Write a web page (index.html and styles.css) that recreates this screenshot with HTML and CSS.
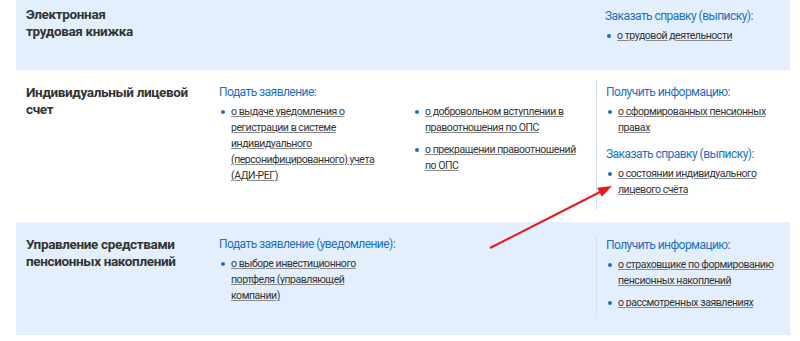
FILE: index.html
```html
<!DOCTYPE html>
<html lang="ru">
<head>
  <meta charset="UTF-8">
  <title>Услуги</title>
  <link rel="stylesheet" href="styles.css">
</head>
<body>
  <div class="services">
    <div class="row blue first">
      <h3 class="title">Электронная<br>трудовая книжка</h3>
      <div class="main"></div>
      <div class="side">
        <p class="head">Заказать справку (выписку):</p>
        <ul>
          <li><a href="#">о трудовой деятельности</a></li>
        </ul>
      </div>
    </div>

    <div class="row second">
      <h3 class="title">Индивидуальный лицевой счет</h3>
      <div class="main">
        <p class="head">Подать заявление:</p>
        <div class="cols">
          <ul>
            <li><a href="#">о выдаче уведомления о регистрации в системе индивидуального (персонифицированного) учета (АДИ-РЕГ)</a></li>
          </ul>
          <ul>
            <li><a href="#">о добровольном вступлении в правоотношения по ОПС</a></li>
            <li><a href="#">о прекращении правоотношений по ОПС</a></li>
          </ul>
        </div>
      </div>
      <div class="side">
        <p class="head">Получить информацию:</p>
        <ul>
          <li><a href="#">о сформированных пенсионных правах</a></li>
        </ul>
        <p class="head">Заказать справку (выписку):</p>
        <ul>
          <li><a href="#">о состоянии индивидуального лицевого счёта</a></li>
        </ul>
      </div>
    </div>

    <div class="row blue third">
      <h3 class="title">Управление средствами пенсионных накоплений</h3>
      <div class="main">
        <p class="head">Подать заявление (уведомление):</p>
        <div class="cols">
          <ul class="narrow">
            <li><a href="#">о выборе инвестиционного портфеля (управляющей компании)</a></li>
          </ul>
        </div>
      </div>
      <div class="side">
        <p class="head">Получить информацию:</p>
        <ul>
          <li><a href="#">о страховщике по формированию пенсионных накоплений</a></li>
          <li><a href="#">о рассмотренных заявлениях</a></li>
        </ul>
      </div>
    </div>

    <svg class="arrow" width="130" height="80" viewBox="0 0 130 80">
      <line x1="2" y1="76" x2="114" y2="19" stroke="#e8191a" stroke-width="2"/>
      <polygon points="124,14 113.8,24.8 109.2,15.8" fill="#e8191a"/>
    </svg>
  </div>
</body>
</html>
```

FILE: styles.css
```css
body {
  margin: 0;
  background: #fff;
  font-family: Roboto, "Noto Sans", Arial, sans-serif;
  color: #333;
}

.services {
  position: relative;
  width: 774px;
  margin-left: 16px;
}

.row {
  display: grid;
  grid-template-columns: 193px 377px 194px;
  padding-left: 10px;
  box-sizing: border-box;
}

.row.blue {
  background: #e3effd;
}

.first {
  height: 70px;
  padding-top: 6px;
}

.second {
  height: 152px;
  padding-top: 10px;
}

.second .title,
.second .main {
  margin-top: 4px;
}

.third {
  height: 113px;
  padding-top: 14px;
}

.title {
  margin: 0;
  font-size: 13.5px;
  line-height: 17px;
  font-weight: bold;
  letter-spacing: -0.35px;
  color: #333;
  padding-right: 10px;
}

.head {
  margin: 0 0 4px 0;
  font-size: 12px;
  line-height: 16px;
  letter-spacing: -0.55px;
  color: #1d6fc2;
}

.cols {
  display: grid;
  grid-template-columns: 194px 183px;
}

.side {
  border-left: 1px solid #d3e2f1;
  padding-left: 9px;
  margin-bottom: 12px;
}

.first .side {
  border-left: none;
  padding-top: 2px;
}

.second .side {
  padding-top: 4px;
}

.third .side {
  padding-top: 1px;
  margin-bottom: 22px;
}

.side .head + ul + .head {
  margin-top: 10px;
}

ul {
  list-style: none;
  margin: 0;
  padding: 0;
}

li {
  position: relative;
  padding-left: 12px;
  font-size: 10.5px;
  line-height: 16px;
  letter-spacing: -0.45px;
  margin-bottom: 6px;
}

li::before {
  content: "";
  position: absolute;
  left: 2px;
  top: 6px;
  width: 4px;
  height: 4px;
  border-radius: 50%;
  background: #1d6fc2;
}

li a {
  color: #333;
  text-decoration: underline;
  text-decoration-color: #888;
}

.cols ul {
  padding-right: 14px;
}

.cols .narrow {
  width: 150px;
}

.arrow {
  position: absolute;
  left: 472px;
  top: 172px;
}
```
